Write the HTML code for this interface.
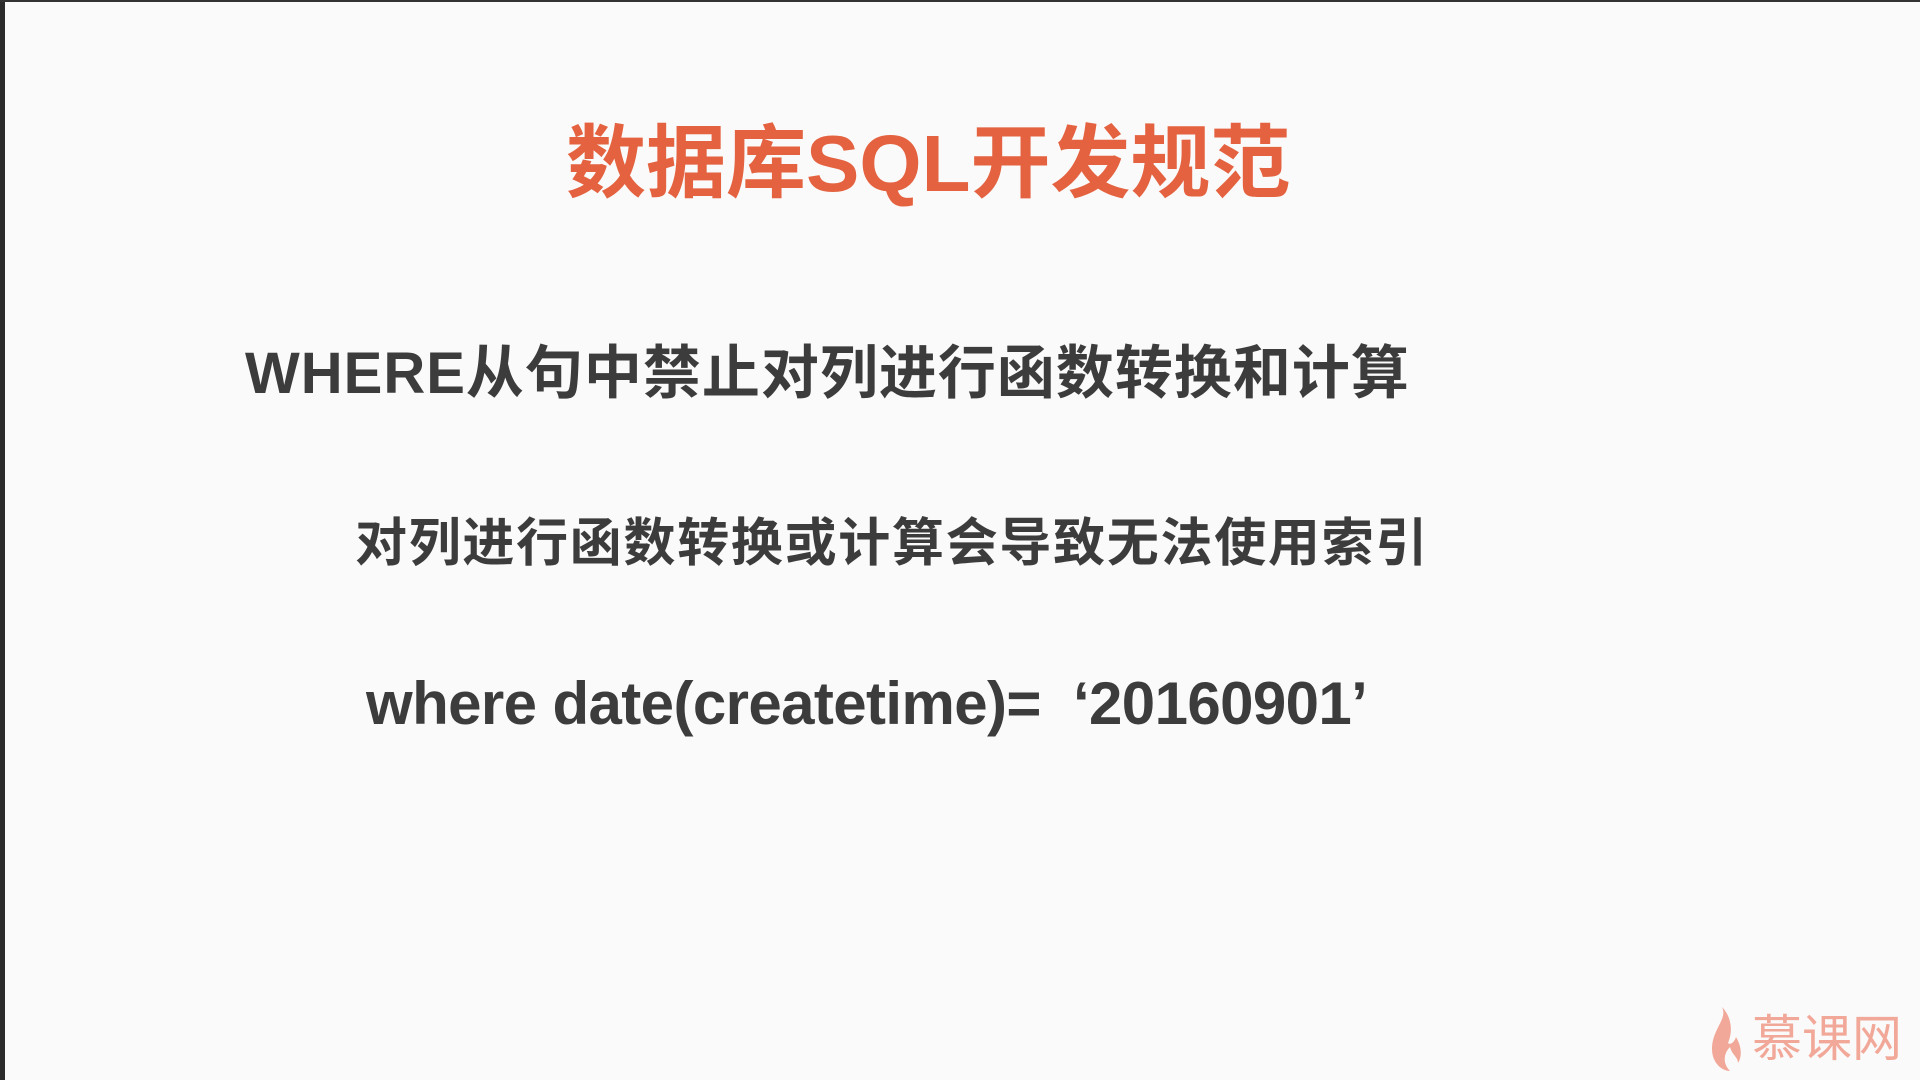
<!DOCTYPE html>
<html><head><meta charset="utf-8"><style>
html,body{margin:0;padding:0}
body{width:1920px;height:1080px;background:#fafafa;position:relative;overflow:hidden;font-family:"Liberation Sans","Noto Sans CJK SC",sans-serif;font-weight:bold}
.l{position:absolute;left:0;top:0;width:5px;height:1080px;background:#2a2a2a}
.t{position:absolute;left:0;top:0;width:1920px;height:2px;background:#333}
.x{position:absolute;white-space:nowrap;line-height:1;transform-origin:left top}
</style></head><body>
<div class="l"></div><div class="t"></div>
<div class="x" style="left:566px;top:124px;font-size:80px;color:#e4623f;letter-spacing:0px">数据库SQL开发规范</div>
<div class="x" style="left:245px;top:345px;font-size:58px;color:#3c3c3c;letter-spacing:1px">WHERE从句中禁止对列进行函数转换和计算</div>
<div class="x" style="left:355px;top:518px;font-size:52px;color:#3c3c3c;letter-spacing:1.7px">对列进行函数转换或计算会导致无法使用索引</div>
<div class="x" style="left:366px;top:674px;font-size:60px;color:#3c3c3c;letter-spacing:-0.6px">where date(createtime)=&nbsp;&nbsp;‘20160901’</div>
<svg style="position:absolute;left:1708px;top:1005px" width="36" height="68" viewBox="0 0 36 68"><path d="M14 2 C20 14 4 24 4 44 C4 58 14 66 22 66 C14 58 16 48 22 42 C24 50 30 52 30 58 C34 52 34 42 28 32 C26 38 22 40 20 38 C26 24 22 10 14 2Z" fill="#f2a898"/></svg>
<div class="x" style="left:1752px;top:1014px;font-size:50px;color:#f2a898;font-weight:normal">慕课网</div>
</body></html>
